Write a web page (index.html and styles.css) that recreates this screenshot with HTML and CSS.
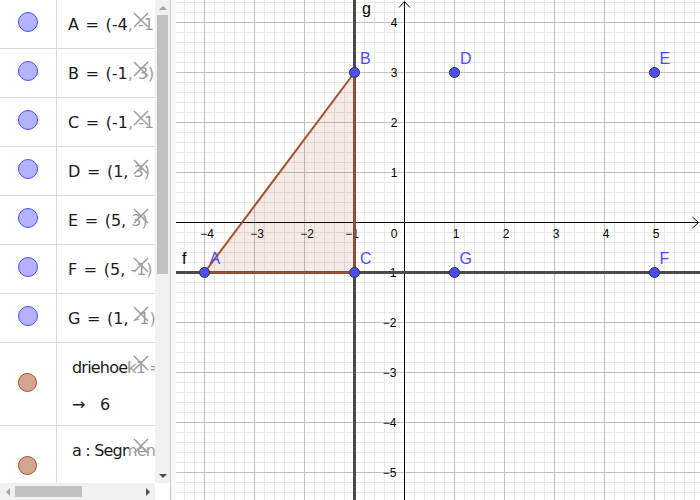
FILE: index.html
```html
<!DOCTYPE html>
<html>
<head>
<meta charset="utf-8">
<link rel="stylesheet" href="styles.css">
</head>
<body>
<div class="app">
  <div class="algebra">
    <div class="av-main">
      <div class="av-list">
        <div class="row"><div class="marble"><span class="dot blue"></span></div><div class="cell">A <span class="eq">=</span> (-4, -1)</div><span class="del"><svg viewBox="0 0 16 16" class="x"><path d="M1 1L15 15M15 1L1 15"/></svg></span></div>
        <div class="row"><div class="marble"><span class="dot blue"></span></div><div class="cell">B <span class="eq">=</span> (-1, 3)</div><span class="del"><svg viewBox="0 0 16 16" class="x"><path d="M1 1L15 15M15 1L1 15"/></svg></span></div>
        <div class="row"><div class="marble"><span class="dot blue"></span></div><div class="cell">C <span class="eq">=</span> (-1, -1)</div><span class="del"><svg viewBox="0 0 16 16" class="x"><path d="M1 1L15 15M15 1L1 15"/></svg></span></div>
        <div class="row"><div class="marble"><span class="dot blue"></span></div><div class="cell">D <span class="eq">=</span> (1, 3)</div><span class="del"><svg viewBox="0 0 16 16" class="x"><path d="M1 1L15 15M15 1L1 15"/></svg></span></div>
        <div class="row"><div class="marble"><span class="dot blue"></span></div><div class="cell">E <span class="eq">=</span> (5, 3)</div><span class="del"><svg viewBox="0 0 16 16" class="x"><path d="M1 1L15 15M15 1L1 15"/></svg></span></div>
        <div class="row"><div class="marble"><span class="dot blue"></span></div><div class="cell">F <span class="eq">=</span> (5, -1)</div><span class="del"><svg viewBox="0 0 16 16" class="x"><path d="M1 1L15 15M15 1L1 15"/></svg></span></div>
        <div class="row"><div class="marble"><span class="dot blue"></span></div><div class="cell">G <span class="eq">=</span> (1, -1)</div><span class="del"><svg viewBox="0 0 16 16" class="x"><path d="M1 1L15 15M15 1L1 15"/></svg></span></div>
        <div class="row tall"><div class="marble"><span class="dot brown"></span></div><div class="cell"><div class="def">driehoek1 = Veelhoek(A, B, C)</div><div class="out"><span class="arr">→</span>6</div></div><span class="del"><svg viewBox="0 0 16 16" class="x"><path d="M1 1L15 15M15 1L1 15"/></svg></span></div>
        <div class="row tall"><div class="marble"><span class="dot brown"></span></div><div class="cell"><div class="def">a : Segment(A, B)</div><div class="out low"><span class="arr">→</span>5</div></div><span class="del"><svg viewBox="0 0 16 16" class="x"><path d="M1 1L15 15M15 1L1 15"/></svg></span></div>
      </div>
      <div class="vscroll">
        <div class="sb-btn"><span class="tri-up"></span></div>
        <div class="vs-track"><div class="vs-thumb"></div></div>
        <div class="sb-btn"><span class="tri-down"></span></div>
      </div>
    </div>
    <div class="hscroll">
      <div class="hs-area">
        <div class="sb-btn h"><span class="tri-left"></span></div>
        <div class="hs-track"><div class="hs-thumb"></div></div>
        <div class="sb-btn h"><span class="tri-right"></span></div>
      </div>
      <div class="corner"></div>
    </div>
  </div>
  <div class="splitter"></div>
  <div class="graphics">
    <svg class="canvas" width="524" height="500" viewBox="176 0 524 500" xmlns="http://www.w3.org/2000/svg">
      <defs>
        <pattern id="minor" x="4" y="2" width="10" height="10" patternUnits="userSpaceOnUse">
          <path d="M0.5 0V10M0 0.5H10" stroke="#e8e8e8" stroke-width="1" fill="none"/>
        </pattern>
        <pattern id="major" x="4" y="22" width="50" height="50" patternUnits="userSpaceOnUse">
          <path d="M0.5 0V50M0 0.5H50" stroke="#c0c0c0" stroke-width="1" fill="none"/>
        </pattern>
      </defs>
      <rect x="176" y="0" width="524" height="500" fill="#ffffff"/>
      <rect x="176" y="0" width="524" height="500" fill="url(#minor)"/>
      <rect x="176" y="0" width="524" height="500" fill="url(#major)"/>
      <path d="M176 222.5H698M404.5 1.5V500" stroke="#000" stroke-width="1" fill="none"/>
      <path d="M692.5 217L698.5 222.5L692.5 228M399 7.5L404.5 1.5L410 7.5" stroke="#000" stroke-width="1" fill="none"/>
      <g class="tick" text-anchor="middle">
        <text x="207" y="237.5">−4</text>
        <text x="257" y="237.5">−3</text>
        <text x="307" y="237.5">−2</text>
        <text x="352" y="237.5">−1</text>
        <text x="456" y="237.5">1</text>
        <text x="506" y="237.5">2</text>
        <text x="556" y="237.5">3</text>
        <text x="606" y="237.5">4</text>
        <text x="656" y="237.5">5</text>
      </g>
      <g class="tick" text-anchor="end">
        <text x="397.5" y="237.5">0</text>
        <text x="397.5" y="27">4</text>
        <text x="397.5" y="77">3</text>
        <text x="397.5" y="127">2</text>
        <text x="397.5" y="177">1</text>
        <text x="396.5" y="277">−1</text>
        <text x="396.5" y="327">−2</text>
        <text x="396.5" y="377">−3</text>
        <text x="396.5" y="427">−4</text>
        <text x="396.5" y="477">−5</text>
      </g>
      <path d="M176 272.5H700M354.5 0V500" stroke="#4b4b4b" stroke-width="3" fill="none"/>
      <polygon points="204.5,272.5 354.5,72.5 354.5,272.5" fill="#993300" fill-opacity="0.1"/>
      <path d="M204.5 272.5L354.5 72.5L354.5 272.5Z" fill="none" stroke="#a35230" stroke-width="2" stroke-linejoin="round"/>
      <g fill="#4d4dff" stroke="#333" stroke-width="1">
        <circle cx="204.5" cy="272.5" r="5"/>
        <circle cx="354.5" cy="72.5" r="5"/>
        <circle cx="354.5" cy="272.5" r="5"/>
        <circle cx="454.5" cy="72.5" r="5"/>
        <circle cx="654.5" cy="72.5" r="5"/>
        <circle cx="654.5" cy="272.5" r="5"/>
        <circle cx="454.5" cy="272.5" r="5"/>
      </g>
      <g class="plabel">
        <text x="209.5" y="263.5">A</text>
        <text x="360" y="63.5">B</text>
        <text x="360" y="263.5">C</text>
        <text x="460" y="63.5">D</text>
        <text x="659.5" y="63.5">E</text>
        <text x="659.5" y="263.5">F</text>
        <text x="459.5" y="263.5">G</text>
      </g>
      <g class="llabel">
        <text x="182" y="263.5">f</text>
        <text x="362" y="14">g</text>
      </g>
    </svg>
  </div>
</div>
</body>
</html>
```
FILE: styles.css
```css
* { box-sizing: border-box; }
html, body { margin: 0; padding: 0; }
body { width: 700px; height: 500px; overflow: hidden; background: #fff; }

.app { display: flex; width: 700px; height: 500px; }

.algebra { width: 170px; flex-shrink: 0; display: flex; flex-direction: column; }
.av-main { display: flex; height: 483px; }
.av-list { width: 155px; height: 483px; overflow: hidden; }

.row { position: relative; display: flex; height: 49px; border-bottom: 1px solid #dcdcdc; }
.row.tall { height: 83px; }

.marble { width: 57px; flex-shrink: 0; border-right: 1px solid #dcdcdc; padding-top: 12px; padding-left: 18px; }
.tall .marble { padding-top: 30px; }

.dot { display: block; width: 20px; height: 20px; border-radius: 50%; }
.dot.blue { background: #b3b3ff; border: 1px solid #4d4dff; }
.dot.brown { width: 19px; height: 19px; background: #d3a692; border: 1px solid #a0522d; }

.cell { padding-left: 11px; padding-top: 15px; font-family: "DejaVu Sans", sans-serif; font-size: 16px; line-height: 20px; white-space: nowrap; color: #1a1a1a; }
.eq { margin: 0 1.5px; }
.tall .cell { padding-left: 15px; }
.def { letter-spacing: -0.8px; }
.out { margin-top: 17px; }
.out.low { margin-top: 21px; }
.arr { display: inline-block; width: 28px; }

.del { position: absolute; left: 129px; top: 0; width: 26px; height: 100%; background: rgba(255, 255, 255, 0.55); }
.x { position: absolute; left: 4px; top: 12px; width: 16px; height: 16px; }
.x path { stroke: #a0a0a0; stroke-width: 1.6; fill: none; }

.vscroll { width: 15px; height: 483px; background: #f1f1f1; display: flex; flex-direction: column; }
.sb-btn { width: 15px; height: 15px; display: flex; align-items: center; justify-content: center; flex-shrink: 0; }
.vs-track { flex: 1; padding: 0 2px; }
.vs-thumb { height: 259px; background: #c1c1c1; }

.tri-up { width: 0; height: 0; border-left: 4px solid transparent; border-right: 4px solid transparent; border-bottom: 4px solid #a3a3a3; }
.tri-down { width: 0; height: 0; border-left: 4px solid transparent; border-right: 4px solid transparent; border-top: 4px solid #505050; }
.tri-left { width: 0; height: 0; border-top: 4px solid transparent; border-bottom: 4px solid transparent; border-right: 4px solid #a3a3a3; }
.tri-right { width: 0; height: 0; border-top: 4px solid transparent; border-bottom: 4px solid transparent; border-left: 4px solid #505050; }

.hscroll { height: 17px; display: flex; }
.hs-area { width: 155px; background: #f1f1f1; display: flex; align-items: center; }
.sb-btn.h { height: 17px; }
.hs-track { flex: 1; display: flex; align-items: center; }
.hs-thumb { width: 67px; height: 11px; background: #c1c1c1; }
.corner { width: 15px; background: #fff; }

.splitter { width: 6px; flex-shrink: 0; border-left: 1px solid #c8c8c8; background: #f8f8f8; }

.graphics { flex: 1; overflow: hidden; }
.canvas { display: block; }
.tick { font-family: "Liberation Sans", Arial, sans-serif; font-size: 12px; fill: #000; }
.plabel { font-family: "Liberation Sans", Arial, sans-serif; font-size: 16px; fill: #4d4dff; }
.llabel { font-family: "Liberation Sans", Arial, sans-serif; font-size: 16px; fill: #000; }
```
